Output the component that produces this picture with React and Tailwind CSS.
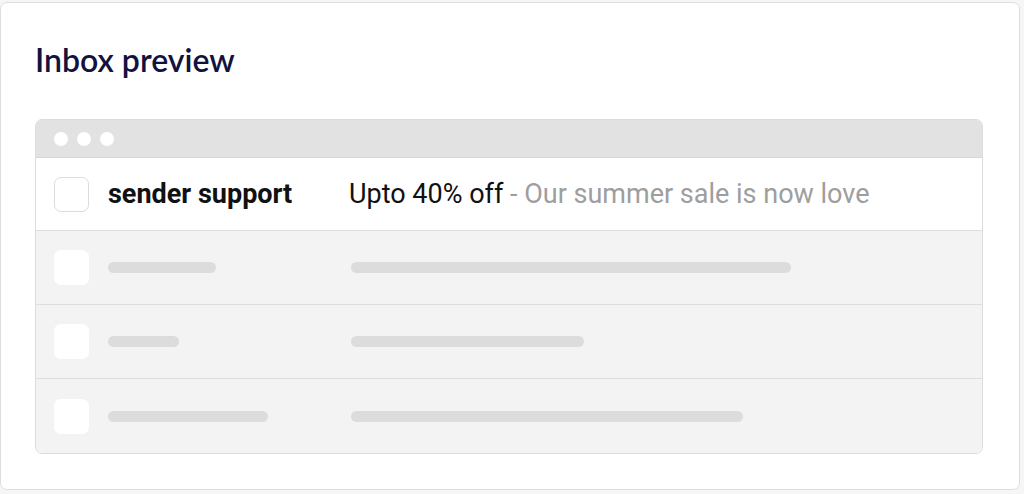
export default function App() {
  const skeletons = [
    { name: 108, subject: 440 },
    { name: 71, subject: 233 },
    { name: 160, subject: 392 },
  ];

  return (
    <div className="min-h-screen bg-[#f6f6f6] pt-[2px]">
      <div className="w-[1020px] h-[488px] bg-white border border-[#dedede] rounded-[7px] pl-[34px] pt-[37px]">
        <h2 className="text-[32px] leading-[40px] font-semibold text-[#12123f] font-['Lato',sans-serif]">Inbox preview</h2>

        <div className="mt-[39px] w-[948px] border border-[#dcdcdc] rounded-[7px] overflow-hidden font-['Roboto',sans-serif]">
          <div className="h-[38px] bg-[#e2e2e2] border-b border-[#d7d7d7] flex items-center gap-[9px] pl-[18px]">
            <span className="w-[14px] h-[14px] rounded-full bg-white" />
            <span className="w-[14px] h-[14px] rounded-full bg-white" />
            <span className="w-[14px] h-[14px] rounded-full bg-white" />
          </div>

          <div className="h-[73px] bg-white border-b border-[#dedede] flex items-center pl-[18px]">
            <div className="w-[35px] h-[35px] rounded-[7px] border border-[#dcdcdc] bg-white shrink-0" />
            <div className="w-[241px] ml-[19px] text-[27px] font-bold text-[#111]">sender support</div>
            <div className="text-[27px] text-[#111]">
              Upto 40% off <span className="text-[#9e9e9e]">- Our summer sale is now love</span>
            </div>
          </div>

          {skeletons.map((s, i) => (
            <div
              key={i}
              className={`h-[74px] bg-[#f3f3f3] flex items-center pl-[18px] ${i < skeletons.length - 1 ? 'border-b border-[#dedede]' : ''}`}
            >
              <div className="w-[35px] h-[35px] rounded-[7px] bg-white shrink-0" />
              <div className="w-[243px] ml-[19px]">
                <div className="h-[11px] rounded-full bg-[#dcdcdc]" style={{ width: s.name }} />
              </div>
              <div className="h-[11px] rounded-full bg-[#dcdcdc]" style={{ width: s.subject }} />
            </div>
          ))}
        </div>
      </div>
    </div>
  );
}
